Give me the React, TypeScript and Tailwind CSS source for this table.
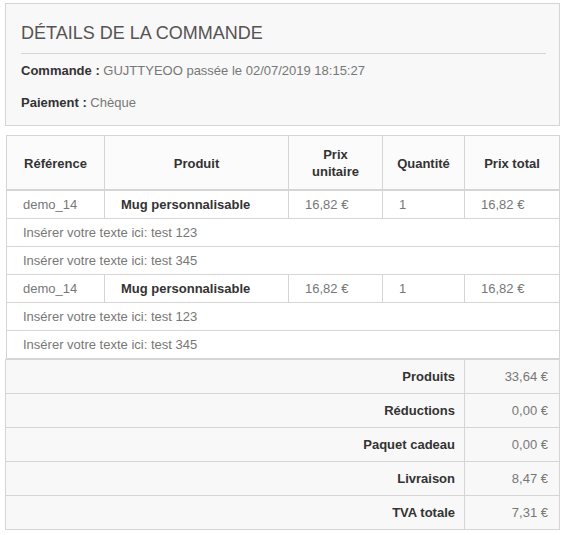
import React from "react";

const lines = [
  { type: "product", ref: "demo_14", name: "Mug personnalisable", unit: "16,82 €", qty: "1", total: "16,82 €" },
  { type: "custom", text: "Insérer votre texte ici: test 123" },
  { type: "custom", text: "Insérer votre texte ici: test 345" },
  { type: "product", ref: "demo_14", name: "Mug personnalisable", unit: "16,82 €", qty: "1", total: "16,82 €" },
  { type: "custom", text: "Insérer votre texte ici: test 123" },
  { type: "custom", text: "Insérer votre texte ici: test 345" },
];

const totals = [
  { label: "Produits", value: "33,64 €" },
  { label: "Réductions", value: "0,00 €" },
  { label: "Paquet cadeau", value: "0,00 €" },
  { label: "Livraison", value: "8,47 €" },
  { label: "TVA totale", value: "7,31 €" },
];

export default function App() {
  return (
    <div
      className="w-[561px] min-h-[535px] bg-white text-[13px] text-[#777777]"
      style={{ fontFamily: '"Liberation Sans", Arial, sans-serif' }}
    >
      {/* Order summary box */}
      <div className="ml-[5px] mt-[3px] mb-[9px] w-[555px] border border-[#d6d4d4] bg-[#f8f8f8] pl-[15px] pr-[13px] pt-[18px] pb-[11px]">
        <h1 className="border-b border-[#d6d4d4] pb-[9px] text-[18px] leading-[22px] font-normal uppercase text-[#555454]">
          Détails de la commande
        </h1>
        <p className="mt-[5px] leading-[23px]">
          <strong className="font-bold text-[#333333]">Commande :</strong> GUJTTYEOO passée le 02/07/2019 18:15:27
        </p>
        <p className="mt-[9px] leading-[23px]">
          <strong className="font-bold text-[#333333]">Paiement :</strong> Chèque
        </p>
      </div>

      {/* Products table */}
      <table className="ml-[6px] w-[553px] table-fixed border-collapse bg-white">
        <colgroup>
          <col className="w-[98px]" />
          <col className="w-[184px]" />
          <col className="w-[94px]" />
          <col className="w-[82px]" />
          <col className="w-[95px]" />
        </colgroup>
        <thead>
          <tr className="bg-[#fbfbfb] text-[#333333]">
            {["Référence", "Produit", "Prix unitaire", "Quantité", "Prix total"].map((h) => (
              <th
                key={h}
                className="border border-b-2 border-[#d6d4d4] px-[8px] pt-[10px] pb-[9px] text-center align-middle font-bold leading-[17px]"
              >
                {h === "Prix unitaire" ? (
                  <>
                    Prix
                    <br />
                    unitaire
                  </>
                ) : (
                  h
                )}
              </th>
            ))}
          </tr>
        </thead>
        <tbody>
          {lines.map((l, i) =>
            l.type === "product" ? (
              <tr key={i}>
                <td className="border border-[#d6d4d4] px-[16px] py-[4px] leading-[19px]">{l.ref}</td>
                <td className="border border-[#d6d4d4] px-[16px] py-[4px] font-bold leading-[19px] text-[#333333]">
                  {l.name}
                </td>
                <td className="border border-[#d6d4d4] px-[16px] py-[4px] leading-[19px]">{l.unit}</td>
                <td className="border border-[#d6d4d4] px-[16px] py-[4px] leading-[19px]">{l.qty}</td>
                <td className="border border-[#d6d4d4] px-[16px] py-[4px] leading-[19px]">{l.total}</td>
              </tr>
            ) : (
              <tr key={i}>
                <td colSpan={5} className="border border-[#d6d4d4] px-[16px] py-[4px] leading-[19px]">
                  {l.text}
                </td>
              </tr>
            )
          )}
        </tbody>
      </table>

      {/* Totals */}
      <table className="ml-[5px] w-[554px] table-fixed border-collapse bg-[#f8f8f8]">
        <colgroup>
          <col className="w-[459px]" />
          <col className="w-[95px]" />
        </colgroup>
        <tbody>
          {totals.map((t) => (
            <tr key={t.label}>
              <td className="border border-[#d6d4d4] pr-[9px] py-[7px] text-right font-bold leading-[19px] text-[#333333]">
                {t.label}
              </td>
              <td className="border border-[#d6d4d4] pr-[11px] py-[7px] text-right leading-[19px]">{t.value}</td>
            </tr>
          ))}
        </tbody>
      </table>
    </div>
  );
}
